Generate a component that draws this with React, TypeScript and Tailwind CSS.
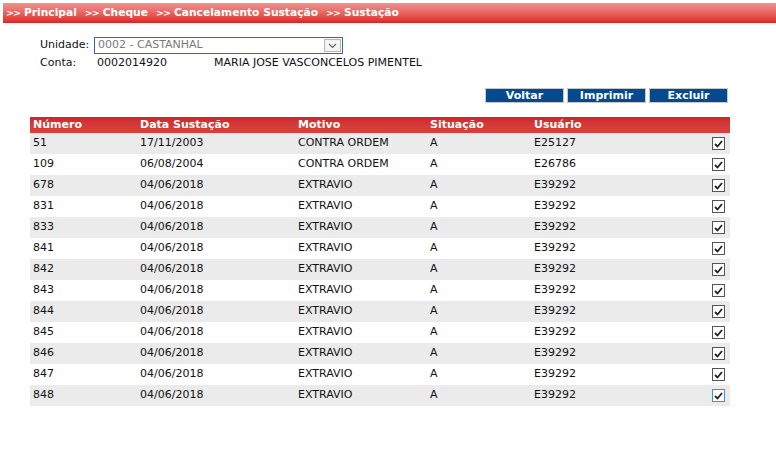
import React from "react";

const rows = [
  { num: "51", data: "17/11/2003", motivo: "CONTRA ORDEM", sit: "A", user: "E25127" },
  { num: "109", data: "06/08/2004", motivo: "CONTRA ORDEM", sit: "A", user: "E26786" },
  { num: "678", data: "04/06/2018", motivo: "EXTRAVIO", sit: "A", user: "E39292" },
  { num: "831", data: "04/06/2018", motivo: "EXTRAVIO", sit: "A", user: "E39292" },
  { num: "833", data: "04/06/2018", motivo: "EXTRAVIO", sit: "A", user: "E39292" },
  { num: "841", data: "04/06/2018", motivo: "EXTRAVIO", sit: "A", user: "E39292" },
  { num: "842", data: "04/06/2018", motivo: "EXTRAVIO", sit: "A", user: "E39292" },
  { num: "843", data: "04/06/2018", motivo: "EXTRAVIO", sit: "A", user: "E39292" },
  { num: "844", data: "04/06/2018", motivo: "EXTRAVIO", sit: "A", user: "E39292" },
  { num: "845", data: "04/06/2018", motivo: "EXTRAVIO", sit: "A", user: "E39292" },
  { num: "846", data: "04/06/2018", motivo: "EXTRAVIO", sit: "A", user: "E39292" },
  { num: "847", data: "04/06/2018", motivo: "EXTRAVIO", sit: "A", user: "E39292" },
  { num: "848", data: "04/06/2018", motivo: "EXTRAVIO", sit: "A", user: "E39292" },
];

const crumbs = ["Principal", "Cheque", "Cancelamento Sustação", "Sustação"];

const Check = ({ focus }: { focus?: boolean }) => (
  <span
    className={
      "flex h-[13px] w-[13px] items-center justify-center border bg-white " +
      (focus ? "border-[#2a9be0]" : "border-[#555]")
    }
  >
    <svg width="9" height="8" viewBox="0 0 9 8">
      <path d="M1 4 L3.5 6.5 L8 1" fill="none" stroke="#222" strokeWidth="1.8" />
    </svg>
  </span>
);

const Btn = ({ label }: { label: string }) => (
  <button className="h-[15px] w-[79px] border border-[#c8c8c8] bg-[#064a8e] text-[11px] font-bold leading-[13px] text-white">
    {label}
  </button>
);

export default function App() {
  return (
    <div className="h-[451px] w-[776px] bg-white text-[11px] text-[#111] [font-family:'DejaVu_Sans',Verdana,sans-serif]">
      <div className="pl-[3px] pt-[3px]">
        <div className="flex h-[20px] items-center gap-[8px] bg-gradient-to-b from-[#ef9292] to-[#dc2020] pl-[3px] text-[10.7px] font-bold text-white">
          {crumbs.map((c) => (
            <span key={c} className="flex items-center gap-[4px]">
              <span className="text-[9.5px] tracking-[-1px]">&gt;&gt;</span>
              {c}
            </span>
          ))}
        </div>
      </div>

      <div className="pl-[40px] pt-[14px]">
        <div className="flex h-[17px] items-center">
          <span className="w-[54px]">Unidade:</span>
          <div className="flex h-[17px] w-[249px] items-center justify-between border border-[#2d6aa8] bg-white pl-[3px] pr-[1px]">
            <span className="text-[#7a7a7a]">0002 - CASTANHAL</span>
            <span className="flex h-[13px] w-[17px] items-center justify-center border border-[#b5b5b5] bg-[#f4f4f4]">
              <svg width="9" height="6" viewBox="0 0 9 6">
                <path d="M1 1 L4.5 4.5 L8 1" fill="none" stroke="#666" strokeWidth="1.2" />
              </svg>
            </span>
          </div>
        </div>
        <div className="mt-[1px] flex h-[17px] items-center">
          <span className="w-[57px]">Conta:</span>
          <span className="w-[117px]">0002014920</span>
          <span>MARIA JOSE VASCONCELOS PIMENTEL</span>
        </div>
      </div>

      <div className="flex justify-end gap-[3px] pr-[48px] pt-[16px]">
        <Btn label="Voltar" />
        <Btn label="Imprimir" />
        <Btn label="Excluir" />
      </div>

      <div className="ml-[30px] mt-[14px] w-[700px]">
        <div className="flex h-[16px] items-center bg-gradient-to-b from-[#cc2626] via-[#d43a3a] to-[#d84040] pl-[3px] font-bold text-white">
          <span className="w-[107px]">Número</span>
          <span className="w-[158px]">Data Sustação</span>
          <span className="w-[132px]">Motivo</span>
          <span className="w-[104px]">Situação</span>
          <span>Usuário</span>
        </div>
        {rows.map((r, i) => (
          <div
            key={r.num}
            className={"flex h-[21px] items-center pl-[3px] " + (i % 2 === 0 ? "bg-[#ebebeb]" : "bg-white")}
          >
            <span className="w-[107px]">{r.num}</span>
            <span className="w-[158px]">{r.data}</span>
            <span className="w-[132px]">{r.motivo}</span>
            <span className="w-[104px]">{r.sit}</span>
            <span className="flex-1">{r.user}</span>
            <span className="mr-[5px]">
              <Check focus={i === rows.length - 1} />
            </span>
          </div>
        ))}
      </div>
    </div>
  );
}
